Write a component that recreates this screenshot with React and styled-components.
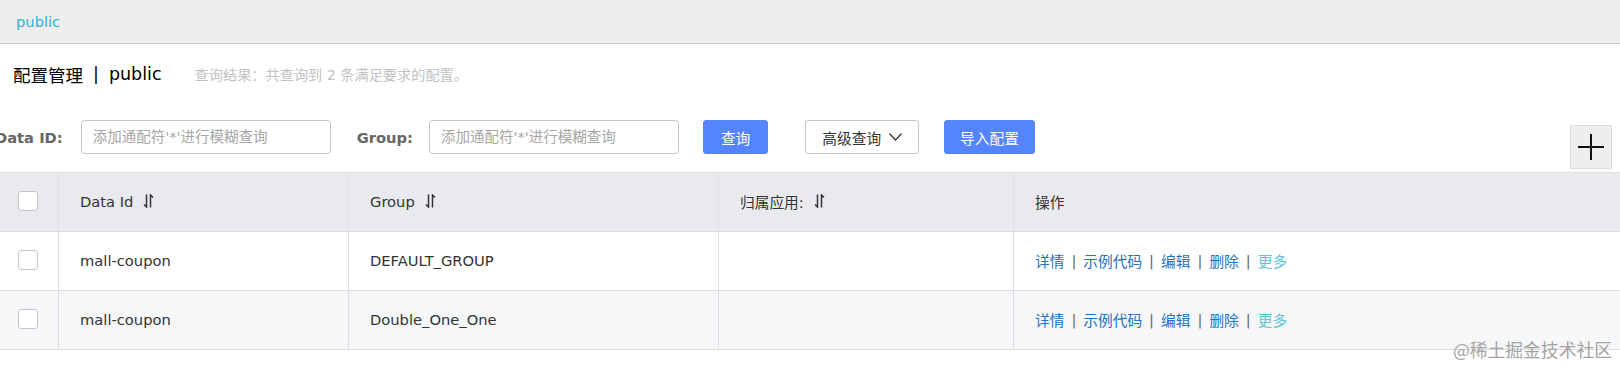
import React from 'react';
import styled, { createGlobalStyle } from 'styled-components';

const GlobalStyle = createGlobalStyle`
  body {
    margin: 0;
    background: #fff;
    font-family: "DejaVu Sans", "Noto Sans CJK SC", sans-serif;
    color: #333;
  }
  * { box-sizing: border-box; }
`;

const Page = styled.div`
  position: relative;
  width: 1620px;
  height: 367px;
  overflow: hidden;
`;

const TopBar = styled.div`
  height: 44px;
  background: #eeeeee;
  border-bottom: 1px solid #cccccc;
  display: flex;
  align-items: center;
  padding-left: 16px;
  font-size: 14.7px;
  color: #2db3d6;
`;

const TitleRow = styled.div`
  height: 60px;
  display: flex;
  align-items: center;
  padding-left: 13px;
`;

const Title = styled.h1`
  margin: 0;
  font-size: 17.5px;
  font-weight: normal;
  color: #000;
  display: flex;
  align-items: center;
`;

const TitleSep = styled.span`
  margin: 0 10px;
`;

const ResultHint = styled.span`
  margin-left: 33px;
  font-size: 14.2px;
  color: #c2c2c2;
`;

const FilterRow = styled.div`
  display: flex;
  align-items: flex-start;
  padding: 16px 8px 0 0;
  margin-left: -5px;
`;

const Field = styled.label`
  display: flex;
  align-items: center;
  height: 34px;
  gap: ${props => props.$gap}px;
  margin-right: ${props => props.$mr}px;
  font-size: 14.7px;
  font-weight: bold;
  color: #666;
  white-space: nowrap;
`;

const Input = styled.input`
  width: 250px;
  height: 34px;
  border: 1px solid #c4c6cf;
  border-radius: 4px;
  padding: 0 11px;
  font-family: inherit;
  font-size: 14.5px;
  outline: none;
  &::placeholder { color: #a6a6a6; }
`;

const Button = styled.button`
  height: 34px;
  padding: 0 ${props => props.$pad}px;
  margin-right: ${props => props.$mr}px;
  border-radius: 3px;
  font-family: inherit;
  font-size: 14.7px;
  display: flex;
  align-items: center;
  gap: 8px;
  cursor: pointer;
  border: 1px solid ${props => (props.$primary ? '#5584ff' : '#c4c6cf')};
  background: ${props => (props.$primary ? '#5584ff' : '#fff')};
  color: ${props => (props.$primary ? '#fff' : '#333')};
`;

const AddButton = styled.button`
  margin: 5px 0 0 auto;
  width: 42px;
  height: 44px;
  background: #eeeeee;
  border: 1px solid #dddddd;
  display: flex;
  align-items: center;
  justify-content: center;
  padding: 0;
`;

const Table = styled.div`
  margin-top: 3px;
`;

const Row = styled.div`
  display: grid;
  grid-template-columns: 59px 290px 370px 295px 1fr;
  height: ${props => (props.$header ? 60 : 59)}px;
  background: ${props => (props.$header ? '#e9eaee' : props.$alt ? '#f6f7f9' : '#fff')};
  border-top: ${props => (props.$header ? '1px solid #dcdee3' : 'none')};
  border-bottom: 1px solid #dcdee3;
`;

const Cell = styled.div`
  display: flex;
  align-items: center;
  padding-left: ${props => (props.$check ? 18 : 21)}px;
  padding-bottom: 2px;
  border-right: 1px solid ${props => (props.$header ? '#dfe0e4' : '#dcdee3')};
  font-size: 14.7px;
  color: #333;
  white-space: nowrap;
  &:last-child { border-right: none; }
`;

const SortIcon = styled.svg`
  margin-left: 10px;
`;

const Checkbox = styled.span`
  width: 20px;
  height: 20px;
  border: 1px solid #c4c6cf;
  border-radius: 3px;
  background: #fff;
`;

const Link = styled.a`
  color: ${props => (props.$more ? '#5ec4d6' : '#2470c2')};
  text-decoration: none;
  cursor: pointer;
`;

const LinkSep = styled.span`
  margin: 0 7px;
  color: #666;
`;

const Watermark = styled.div`
  position: absolute;
  right: 8px;
  bottom: 5px;
  font-size: 17.8px;
  color: #a3a3a3;
  font-family: "Noto Sans CJK SC", sans-serif;
`;

const Sort = () => (
  <SortIcon width="11" height="14" viewBox="0 0 11 14" fill="none" stroke="#333" strokeWidth="1.5">
    <path d="M3.5 0.5V13L1 10.5" />
    <path d="M7.5 13.5V1L10 3.5" />
  </SortIcon>
);

const rows = [
  { dataId: 'mall-coupon', group: 'DEFAULT_GROUP', app: '' },
  { dataId: 'mall-coupon', group: 'Double_One_One', app: '' }
];

const actions = ['详情', '示例代码', '编辑', '删除'];

export default function App() {
  return (
    <Page>
      <GlobalStyle />
      <TopBar>public</TopBar>

      <TitleRow>
        <Title>
          配置管理<TitleSep>|</TitleSep>public
        </Title>
        <ResultHint>查询结果：共查询到 2 条满足要求的配置。</ResultHint>
      </TitleRow>

      <FilterRow>
        <Field $gap={18} $mr={26}>
          Data ID:
          <Input placeholder="添加通配符'*'进行模糊查询" />
        </Field>
        <Field $gap={16} $mr={24}>
          Group:
          <Input placeholder="添加通配符'*'进行模糊查询" />
        </Field>
        <Button $primary $pad={17} $mr={37}>查询</Button>
        <Button $pad={16} $mr={25}>
          高级查询
          <svg width="13" height="8" viewBox="0 0 13 8" fill="none" stroke="#333" strokeWidth="1.2">
            <path d="M0.5 0.5L6.5 7L12.5 0.5" />
          </svg>
        </Button>
        <Button $primary $pad={15} $mr={0}>导入配置</Button>
        <AddButton>
          <svg width="26" height="26" viewBox="0 0 26 26" stroke="#111" strokeWidth="2">
            <path d="M13 0V26M0 13H26" />
          </svg>
        </AddButton>
      </FilterRow>

      <Table>
        <Row $header>
          <Cell $header $check><Checkbox /></Cell>
          <Cell $header>Data Id<Sort /></Cell>
          <Cell $header>Group<Sort /></Cell>
          <Cell $header>归属应用:<Sort /></Cell>
          <Cell $header>操作</Cell>
        </Row>
        {rows.map((row, i) => (
          <Row key={i} $alt={i % 2 === 1}>
            <Cell $check><Checkbox /></Cell>
            <Cell>{row.dataId}</Cell>
            <Cell>{row.group}</Cell>
            <Cell>{row.app}</Cell>
            <Cell>
              {actions.map(a => (
                <React.Fragment key={a}>
                  <Link>{a}</Link>
                  <LinkSep>|</LinkSep>
                </React.Fragment>
              ))}
              <Link $more>更多</Link>
            </Cell>
          </Row>
        ))}
      </Table>

      <Watermark>@稀土掘金技术社区</Watermark>
    </Page>
  );
}
